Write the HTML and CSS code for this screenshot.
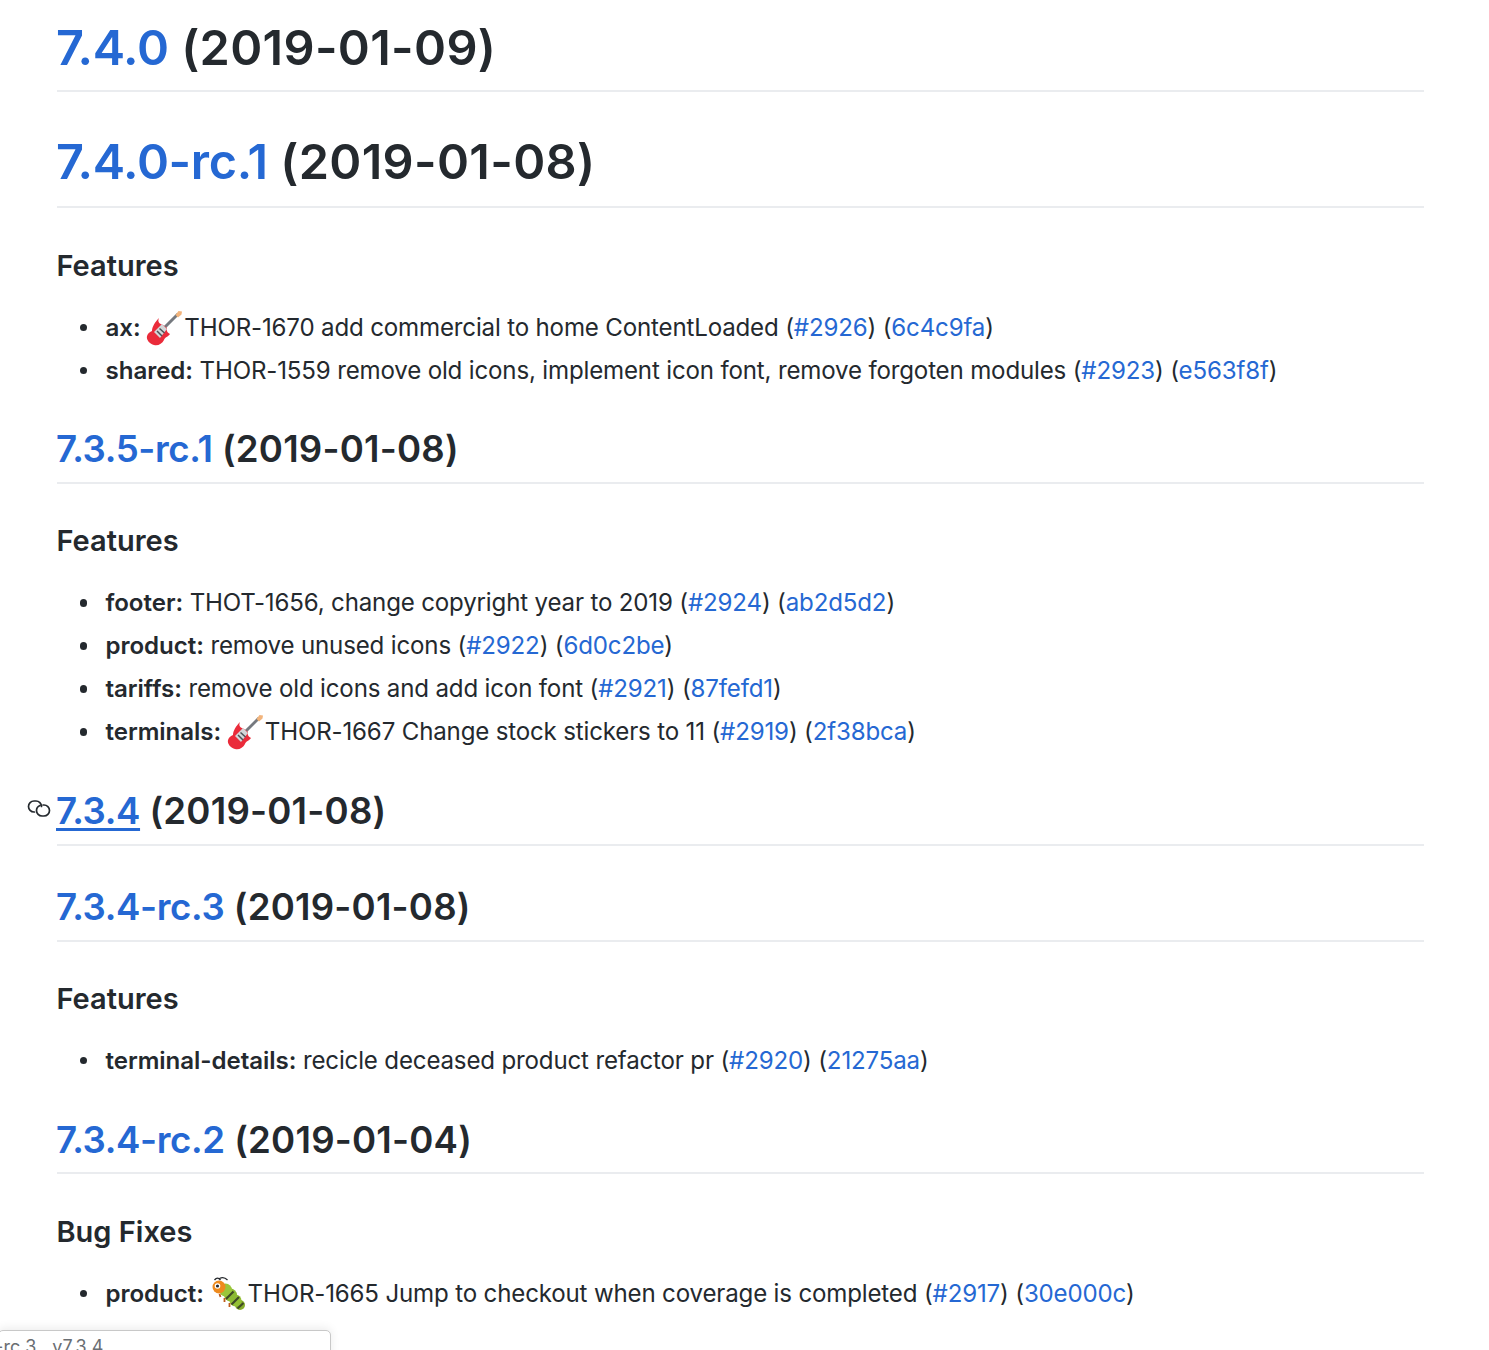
FILE: index.html
```html
<!DOCTYPE html>
<html lang="en">
<head>
<meta charset="utf-8">
<title>Changelog</title>
<link rel="stylesheet" href="styles.css">
</head>
<body>
<svg class="defs" width="0" height="0" aria-hidden="true">
  <defs>
    <symbol id="guitar" viewBox="0 0 36 36">
      <path d="M16 20 L32 4" stroke="#75797f" stroke-width="3" fill="none"/>
      <path d="M29.500 5 L32.500 1 L36 1.500 L35.500 4.500 L32 7.500 Z" fill="#f2b47c"/>
      <path d="M13 8 C11 12 14 14 17 15 L21 18 C20 21 22 23 24 24 C22 27 19 27 18 30 C16 34 12 36 8 35 C4 34 0 30 1 26 C2 23 4 22 6 21 C6 17 9 12 13 8 Z" fill="#ea2b3a"/>
      <path d="M8 22 L16 14 L21 19 L14 28 Z" fill="#d3d6d8"/>
      <path d="M11 21 L16 26 M13.500 18.500 L18.500 23" stroke="#4d5257" stroke-width="1.500"/>
    </symbol>
    <symbol id="bug" viewBox="-2.5 0 36 36">
      <circle cx="28.500" cy="29" r="5" fill="#86ad2c"/>
      <circle cx="24" cy="24.500" r="6" fill="#94c034"/>
      <circle cx="19" cy="19" r="6.500" fill="#8cba33"/>
      <circle cx="14" cy="14" r="6.500" fill="#9ac63a"/>
      <path d="M14.500 23 L22 15.500 M20 28.500 L27.500 21 M26 32.500 L32 27" stroke="#3f4a26" stroke-width="2.200"/>
      <circle cx="7.500" cy="11" r="6.500" fill="#ee8a1e"/>
      <circle cx="6" cy="10" r="2.800" fill="#fff"/>
      <circle cx="6" cy="10" r="1.600" fill="#26292d"/>
      <path d="M3 4 C5 1.500 7 1.500 9 4 M8 2.500 C11 1 14 2 16 4" stroke="#26292d" stroke-width="1.300" fill="none"/>
      <path d="M8 18 L9 21 M13 22 L13 26 M18 27 L18 31" stroke="#bd5a1b" stroke-width="1.800"/>
    </symbol>
  </defs>
</svg>
<main class="markdown">
  <h1 class="release"><a href="#">7.4.0</a> (2019-01-09)</h1>
  <h1><a href="#">7.4.0-rc.1</a> (2019-01-08)</h1>
  <h3>Features</h3>
  <ul>
    <li><strong>ax:</strong> <svg class="emoji"><use href="#guitar"/></svg> THOR-1670 add commercial to home ContentLoaded (<a href="#">#2926</a>) (<a href="#">6c4c9fa</a>)</li>
    <li><strong>shared:</strong> THOR-1559 remove old icons, implement icon font, remove forgoten modules (<a href="#">#2923</a>) (<a href="#">e563f8f</a>)</li>
  </ul>
  <h2><a href="#">7.3.5-rc.1</a> (2019-01-08)</h2>
  <h3>Features</h3>
  <ul>
    <li><strong>footer:</strong> THOT-1656, change copyright year to 2019 (<a href="#">#2924</a>) (<a href="#">ab2d5d2</a>)</li>
    <li><strong>product:</strong> remove unused icons (<a href="#">#2922</a>) (<a href="#">6d0c2be</a>)</li>
    <li><strong>tariffs:</strong> remove old icons and add icon font (<a href="#">#2921</a>) (<a href="#">87fefd1</a>)</li>
    <li><strong>terminals:</strong> <svg class="emoji"><use href="#guitar"/></svg> THOR-1667 Change stock stickers to 11 (<a href="#">#2919</a>) (<a href="#">2f38bca</a>)</li>
  </ul>
  <h2 class="anchored">
    <svg class="anchor" viewBox="0 0 24 17" aria-hidden="true">
      <path d="M7.500 12H7a5.500 5.500 0 0 1 0-11H9a5.500 5.500 0 0 1 5.500 5.500" fill="none" stroke="#24292e" stroke-width="1.700" stroke-linecap="round"/>
      <path d="M16 5H17a5.500 5.500 0 0 1 0 11H15a5.500 5.500 0 0 1-5.500-5.500 5.500 5.500 0 0 1 3.500-5" fill="none" stroke="#24292e" stroke-width="1.700" stroke-linecap="round"/>
    </svg>
    <a class="hover" href="#">7.3.4</a> (2019-01-08)</h2>
  <h2><a href="#">7.3.4-rc.3</a> (2019-01-08)</h2>
  <h3>Features</h3>
  <ul>
    <li><strong>terminal-details:</strong> recicle deceased product refactor pr (<a href="#">#2920</a>) (<a href="#">21275aa</a>)</li>
  </ul>
  <h2><a href="#">7.3.4-rc.2</a> (2019-01-04)</h2>
  <h3>Bug Fixes</h3>
  <ul>
    <li><strong>product:</strong> <svg class="emoji"><use href="#bug"/></svg> THOR-1665 Jump to checkout when coverage is completed (<a href="#">#2917</a>) (<a href="#">30e000c</a>)</li>
  </ul>
</main>
<div class="status-tip"><span class="tip-text">-rc.3&nbsp;&nbsp; v7.3.4</span></div>
</body>
</html>
```
FILE: styles.css
```css
html, body {
  margin: 0;
  padding: 0;
  height: 1350px;
  overflow: hidden;
  background: #fff;
}
body {
  position: relative;
  font-family: Inter, "Noto Sans", sans-serif;
  font-size: 24.1px;
  letter-spacing: -0.17px;
  line-height: 1.5;
  color: #24292e;
}
.defs { position: absolute; }
.markdown {
  padding: 18px 65px 0 57px;
}
a {
  color: #2568d3;
  text-decoration: none;
}
a.hover { text-decoration: underline; text-decoration-thickness: 3px; text-underline-offset: 4px; }
h1, h2 {
  font-weight: 600;
  line-height: 1.25;
  border-bottom: 2px solid #eaecef;
  margin: 0;
  text-indent: -1px;
}
h1 a, h2 a { letter-spacing: -0.35px; }
h1 {
  font-size: 48.6px;
  letter-spacing: 0.33px;
  padding-bottom: 14px;
}
h1.release {
  padding-bottom: 11px;
  margin-bottom: 40px;
}
h2 {
  font-size: 36.6px;
  letter-spacing: 0.22px;
  padding-bottom: 9px;
  margin: 38.700px 0 25px;
}
h2 + h2 { margin-top: 39.200px; }
h3 {
  font-size: 29px;
  font-weight: 600;
  line-height: 1.25;
  letter-spacing: 0;
  text-indent: -0.5px;
  margin: 39.300px 0 24.700px;
}
ul {
  margin: 0;
  padding: 0 0 0 48.500px;
  list-style: none;
}
li { position: relative; margin-bottom: 6px; line-height: 37px; }
li:last-child { margin-bottom: 0; }
li::before {
  content: "";
  position: absolute;
  left: -26px;
  top: 15px;
  width: 7.500px;
  height: 7.500px;
  border-radius: 50%;
  background: #24292e;
}
strong { font-weight: 600; letter-spacing: -0.05px; }
.emoji {
  width: 36px;
  height: 36px;
  vertical-align: -10px;
  margin: 0 -4.500px 0 -1px;
}
.anchored { position: relative; text-indent: 0; }
.anchored a { margin-left: -1px; }
.anchor {
  position: absolute;
  left: -30px;
  top: 11px;
  width: 24px;
  height: 17px;
}
.status-tip {
  position: absolute;
  left: -2px;
  top: 1330px;
  width: 331px;
  height: 40px;
  background: #fff;
  border: 1px solid #c8c8c8;
  border-radius: 5px;
  box-shadow: 0 -2px 10px rgba(0,0,0,.08);
  font-size: 18px;
  letter-spacing: 0.15px;
  color: #6a6e73;
  line-height: 32px;
}
.tip-text { margin-left: -4px; }
```
